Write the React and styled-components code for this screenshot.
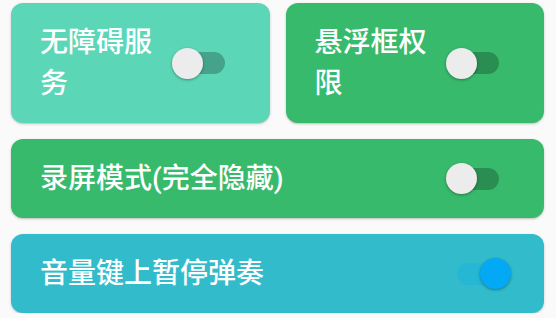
import React from "react";
import styled, { createGlobalStyle } from "styled-components";

const Global = createGlobalStyle`
  html, body { margin: 0; padding: 0; background: #fafafa; }
  body { font-family: Roboto, "Noto Sans CJK SC", sans-serif; }
`;

const Page = styled.div`
  display: grid;
  grid-template-columns: 1fr 1fr;
  gap: 16px;
  padding: 3px 12px 0 11px;
`;

const Card = styled.div`
  grid-column: ${(p) => (p.$wide ? "1 / -1" : "auto")};
  background: ${(p) => p.$bg};
  border-radius: 12px;
  box-shadow: 0 1px 3px rgba(0, 0, 0, 0.18), 0 1px 1px rgba(0, 0, 0, 0.08);
  display: flex;
  align-items: center;
  gap: 8px;
  padding: 19px 33px 19px 29px;
  min-height: 41px;
`;

const Label = styled.div`
  flex: 1;
  min-width: 0;
  color: #fff;
  font-size: 28px;
  line-height: 41px;
  font-weight: 500;
  font-family: Roboto, "Noto Sans CJK SC", sans-serif;
`;

const SwitchBox = styled.div`
  position: relative;
  flex: none;
  width: 65px;
  height: 31px;
`;

const Track = styled.div`
  position: absolute;
  left: 11px;
  top: 4.5px;
  width: 42px;
  height: 22px;
  border-radius: 11px;
  background: ${(p) => (p.$on ? "rgba(3, 169, 244, 0.25)" : "rgba(0, 0, 0, 0.24)")};
`;

const Thumb = styled.div`
  position: absolute;
  top: 0;
  left: ${(p) => (p.$on ? "34px" : "0")};
  width: 31px;
  height: 31px;
  border-radius: 50%;
  background: ${(p) => (p.$on ? "#03a9f4" : "#ececec")};
  box-shadow: 0 1px 3px rgba(0, 0, 0, 0.35);
`;

function Switch({ on }) {
  return (
    <SwitchBox>
      <Track $on={on} />
      <Thumb $on={on} />
    </SwitchBox>
  );
}

const items = [
  { label: "无障碍服务", bg: "#5bd7b7", on: false },
  { label: "悬浮框权限", bg: "#38ba6c", on: false },
  { label: "录屏模式(完全隐藏)", bg: "#38ba6c", on: false, wide: true },
  { label: "音量键上暂停弹奏", bg: "#32bccb", on: true, wide: true },
];

export default function App() {
  return (
    <>
      <Global />
      <Page>
        {items.map((it) => (
          <Card key={it.label} $bg={it.bg} $wide={it.wide}>
            <Label>{it.label}</Label>
            <Switch on={it.on} />
          </Card>
        ))}
      </Page>
    </>
  );
}
